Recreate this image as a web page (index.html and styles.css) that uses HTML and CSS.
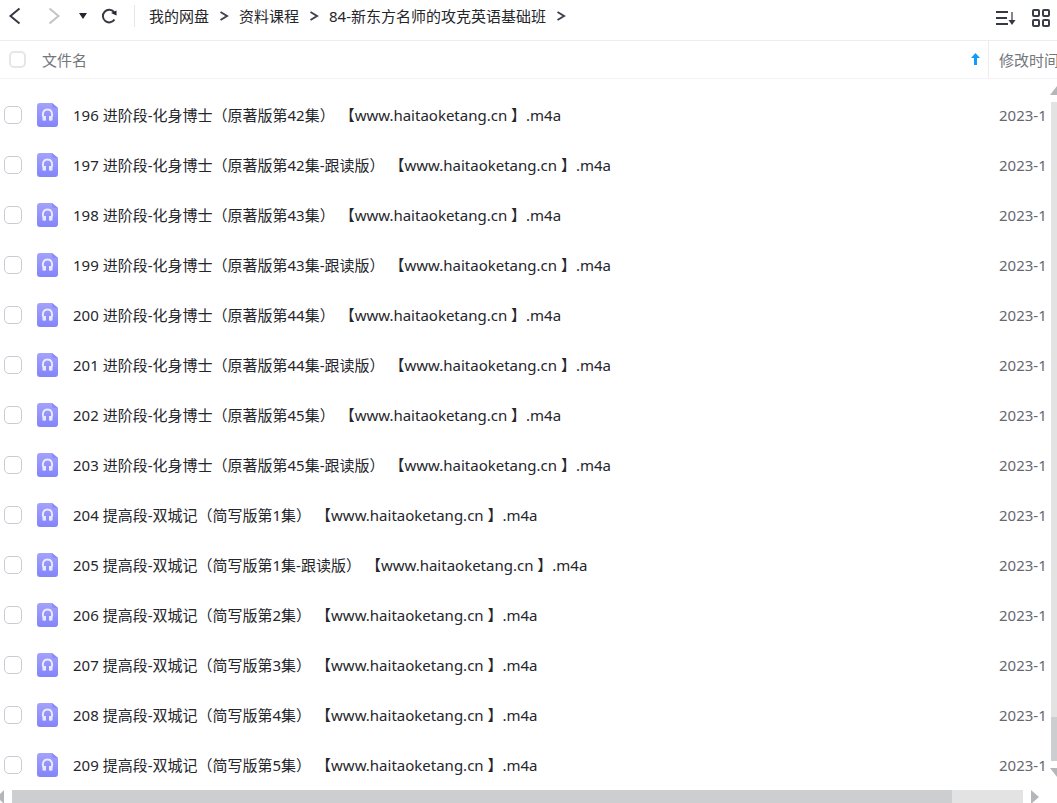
FILE: index.html
```html
<!DOCTYPE html>
<html lang="zh-CN">
<head>
    <meta charset="UTF-8">
    <title>我的网盘</title>
    <link rel="stylesheet" href="styles.css">
</head>
<body>
    <!-- 图标 -->
    <svg class="icon-defs" aria-hidden="true">
        <defs>
            <linearGradient id="audio-bg" x1="0" y1="0" x2="0" y2="1">
                <stop offset="0" stop-color="#a3a2fb"/>
                <stop offset="1" stop-color="#8384fb"/>
            </linearGradient>
        </defs>
        <symbol id="audio" viewBox="0 0 21 24">
            <path d="M3 0h12l6 5v16a3 3 0 0 1-3 3H3a3 3 0 0 1-3-3V3a3 3 0 0 1 3-3z" fill="url(#audio-bg)"/>
            <path d="M15 0l6 5h-4a2 2 0 0 1-2-2z" fill="#8b8bf8"/>
            <path d="M8 16.500H6.500V15C5 11 6 6.500 10.500 6.500S16 11 14.500 15v1.500H13" fill="none" stroke="#e9e9ff" stroke-width="2"/>
            <path d="M7 13h2v4.500H7zM12 13h2v4.500h-2z" fill="#e9e9ff"/>
        </symbol>
        <symbol id="arrow" viewBox="0 0 10 10">
            <path d="M1.500 1L8 5 1.500 9" fill="none" stroke="#40434f" stroke-width="2"/>
        </symbol>
    </svg>

    <div class="page">
        <header class="toolbar">
            <button class="btn" aria-label="后退"><svg width="14" height="18" viewBox="0 0 14 18"><path d="M11.500 1.500L2.500 9l9 7.500" fill="none" stroke="#363945" stroke-width="2"/></svg></button>
            <button class="btn btn-next" aria-label="前进"><svg width="14" height="18" viewBox="0 0 14 18"><path d="M2.500 1.500l9 7.500-9 7.500" fill="none" stroke="#c4c4c6" stroke-width="2"/></svg></button>
            <button class="btn btn-history" aria-label="历史"><svg width="8" height="8" viewBox="0 0 8 8"><path d="M0 1h8L4 7z" fill="#25272f"/></svg></button>
            <button class="btn btn-refresh" aria-label="刷新"><svg width="18" height="18" viewBox="0 0 18 18"><path d="M14.500 12.500A6.300 6.300 0 1 1 14 5" fill="none" stroke="#363945" stroke-width="2"/><path d="M11 6L16.500 3.500v5z" fill="#25272f"/></svg></button>
            <span class="line"></span>
            <nav class="crumbs">
                <a href="#">我的网盘</a>
                <svg class="sep"><use href="#arrow"/></svg>
                <a href="#">资料课程</a>
                <svg class="sep"><use href="#arrow"/></svg>
                <a href="#">84-新东方名师的攻克英语基础班</a>
                <svg class="sep"><use href="#arrow"/></svg>
            </nav>
            <button class="btn btn-sort" aria-label="排序"><svg width="21" height="18" viewBox="0 0 21 18"><path d="M1 3h12M1 9h11M1 15h12" stroke="#363945" stroke-width="2"/><path d="M17 3v11" stroke="#5a5d68" stroke-width="1.500"/><path d="M13.500 11h7L17 16z" fill="#363945"/></svg></button>
            <button class="btn btn-grid" aria-label="宫格"><svg width="18" height="18" viewBox="0 0 18 18"><g fill="none" stroke="#3b3e49" stroke-width="2"><rect x="1" y="1" width="6" height="6" rx="1"/><rect x="11" y="1" width="6" height="6" rx="1"/><rect x="1" y="11" width="6" height="6" rx="1"/><rect x="11" y="11" width="6" height="6" rx="1"/></g></svg></button>
        </header>

        <main class="list">
            <table class="files">
                <thead>
                    <tr>
                        <th class="name">
                            <div class="head">
                                <input type="checkbox" class="check check-all" aria-label="全选">
                                <span>文件名</span>
                                <svg class="up" width="9" height="13" viewBox="0 0 9 13"><path d="M4.500 0L9 5H6v7H3V5H0z" fill="#129bff"/></svg>
                            </div>
                        </th>
                        <th class="date">修改时间</th>
                    </tr>
                </thead>
                <tbody>
                    <tr><td><label class="file"><input type="checkbox" class="check"><svg class="icon"><use href="#audio"/></svg><span>196 进阶段-化身博士（原著版第42集）</span><span class="site">【www.haitaoketang.cn 】.m4a</span></label></td><td class="date"><div>2023-1</div></td></tr>
                    <tr><td><label class="file"><input type="checkbox" class="check"><svg class="icon"><use href="#audio"/></svg><span>197 进阶段-化身博士（原著版第42集-跟读版）</span><span class="site">【www.haitaoketang.cn 】.m4a</span></label></td><td class="date"><div>2023-1</div></td></tr>
                    <tr><td><label class="file"><input type="checkbox" class="check"><svg class="icon"><use href="#audio"/></svg><span>198 进阶段-化身博士（原著版第43集）</span><span class="site">【www.haitaoketang.cn 】.m4a</span></label></td><td class="date"><div>2023-1</div></td></tr>
                    <tr><td><label class="file"><input type="checkbox" class="check"><svg class="icon"><use href="#audio"/></svg><span>199 进阶段-化身博士（原著版第43集-跟读版）</span><span class="site">【www.haitaoketang.cn 】.m4a</span></label></td><td class="date"><div>2023-1</div></td></tr>
                    <tr><td><label class="file"><input type="checkbox" class="check"><svg class="icon"><use href="#audio"/></svg><span>200 进阶段-化身博士（原著版第44集）</span><span class="site">【www.haitaoketang.cn 】.m4a</span></label></td><td class="date"><div>2023-1</div></td></tr>
                    <tr><td><label class="file"><input type="checkbox" class="check"><svg class="icon"><use href="#audio"/></svg><span>201 进阶段-化身博士（原著版第44集-跟读版）</span><span class="site">【www.haitaoketang.cn 】.m4a</span></label></td><td class="date"><div>2023-1</div></td></tr>
                    <tr><td><label class="file"><input type="checkbox" class="check"><svg class="icon"><use href="#audio"/></svg><span>202 进阶段-化身博士（原著版第45集）</span><span class="site">【www.haitaoketang.cn 】.m4a</span></label></td><td class="date"><div>2023-1</div></td></tr>
                    <tr><td><label class="file"><input type="checkbox" class="check"><svg class="icon"><use href="#audio"/></svg><span>203 进阶段-化身博士（原著版第45集-跟读版）</span><span class="site">【www.haitaoketang.cn 】.m4a</span></label></td><td class="date"><div>2023-1</div></td></tr>
                    <tr><td><label class="file"><input type="checkbox" class="check"><svg class="icon"><use href="#audio"/></svg><span>204 提高段-双城记（简写版第1集）</span><span class="site">【www.haitaoketang.cn 】.m4a</span></label></td><td class="date"><div>2023-1</div></td></tr>
                    <tr><td><label class="file"><input type="checkbox" class="check"><svg class="icon"><use href="#audio"/></svg><span>205 提高段-双城记（简写版第1集-跟读版）</span><span class="site">【www.haitaoketang.cn 】.m4a</span></label></td><td class="date"><div>2023-1</div></td></tr>
                    <tr><td><label class="file"><input type="checkbox" class="check"><svg class="icon"><use href="#audio"/></svg><span>206 提高段-双城记（简写版第2集）</span><span class="site">【www.haitaoketang.cn 】.m4a</span></label></td><td class="date"><div>2023-1</div></td></tr>
                    <tr><td><label class="file"><input type="checkbox" class="check"><svg class="icon"><use href="#audio"/></svg><span>207 提高段-双城记（简写版第3集）</span><span class="site">【www.haitaoketang.cn 】.m4a</span></label></td><td class="date"><div>2023-1</div></td></tr>
                    <tr><td><label class="file"><input type="checkbox" class="check"><svg class="icon"><use href="#audio"/></svg><span>208 提高段-双城记（简写版第4集）</span><span class="site">【www.haitaoketang.cn 】.m4a</span></label></td><td class="date"><div>2023-1</div></td></tr>
                    <tr><td><label class="file"><input type="checkbox" class="check"><svg class="icon"><use href="#audio"/></svg><span>209 提高段-双城记（简写版第5集）</span><span class="site">【www.haitaoketang.cn 】.m4a</span></label></td><td class="date"><div>2023-1</div></td></tr>
                </tbody>
            </table>
            <!-- 纵向滚动条 -->
            <div class="vbar">
                <svg width="7" height="9" viewBox="0 0 7 9"><path d="M7 0v9H0z" fill="#b4b7ba"/></svg>
                <div class="vtrack"><div class="vthumb"></div></div>
                <svg width="7" height="9" viewBox="0 0 7 9"><path d="M0 0h7v9z" fill="#b4b7ba"/></svg>
            </div>
        </main>

        <!-- 横向滚动条 -->
        <div class="hbar">
            <svg width="4" height="14" viewBox="0 0 4 14"><path d="M4 0v14L0 10V4z" fill="#b4b7ba"/></svg>
            <div class="htrack"><div class="hthumb"></div></div>
            <svg width="8" height="14" viewBox="0 0 8 14"><path d="M0 0l8 7-8 7z" fill="#b4b7ba"/></svg>
        </div>
    </div>
</body>
</html>
```
FILE: styles.css
```css
* {
    box-sizing: border-box;
}
body {
    margin: 0;
    background: #fff;
    color: #25262b;
    font-family: "Noto Sans", "Noto Sans CJK SC", sans-serif;
    font-size: 15px;
    line-height: 20px;
    text-spacing-trim: space-all;
}
.icon-defs {
    position: absolute;
    width: 0;
    height: 0;
}
.page {
    display: flex;
    flex-direction: column;
    height: 100vh;
    overflow: hidden;
}
.toolbar {
    display: flex;
    align-items: center;
    flex: none;
    height: 41px;
    padding: 0 7px 8px 8px;
    border-bottom: 1px solid #ededef;
}
.btn {
    flex: none;
    padding: 0;
    border: 0;
    background: none;
}
.btn>svg {
    display: block;
}
.btn-next {
    margin-left: 25px;
}
.btn-history {
    margin-left: 18px;
}
.btn-refresh {
    margin-left: 13px;
}
.line {
    width: 1px;
    height: 22px;
    margin: 0 14px 0 16px;
    background: #e6e6e8;
}
.crumbs {
    display: flex;
    flex: 1;
    align-items: center;
    gap: 10px;
    white-space: nowrap;
}
.crumbs>a {
    color: #25262b;
    text-decoration: none;
}
.sep {
    width: 10px;
    height: 10px;
}
.btn-sort,
.btn-grid {
    margin-top: 4px;
}
.btn-grid {
    margin-left: 16px;
}
.list {
    position: relative;
    flex: 1;
    min-height: 0;
    overflow: hidden;
}
.files {
    width: 100%;
    table-layout: fixed;
    border-collapse: separate;
    border-spacing: 0;
}
.files th {
    height: 38px;
    padding: 0;
    border-bottom: 1px solid #f3f3f5;
    color: #74767c;
    font-weight: normal;
    text-align: left;
    white-space: nowrap;
}
.files td {
    height: 50px;
    padding: 0;
}
.files tbody::before {
    content: "";
    display: block;
    height: 11px;
}
.files .date {
    width: 69px;
    padding-left: 10px;
    overflow: hidden;
}
.files th.date {
    border-left: 1px solid #ededef;
}
.files td.date {
    padding: 0 11px;
    color: #66686f;
}
.date>div {
    overflow: hidden;
    white-space: nowrap;
}
.head {
    display: flex;
    align-items: center;
    gap: 16px;
    padding: 0 8px 0 9px;
}
.up {
    margin-left: auto;
}
.file {
    display: flex;
    align-items: center;
    padding-left: 4px;
    white-space: nowrap;
}
.site {
    margin-left: 5px;
}
.check {
    flex: none;
    appearance: none;
    width: 18px;
    height: 18px;
    margin: 0;
    border: 1px solid #c9ccd3;
    border-radius: 5px;
    background: #fff;
}
.check-all {
    width: 17px;
    height: 17px;
    border: 2px solid #e6e6e8;
}
.icon {
    flex: none;
    width: 21px;
    height: 24px;
    margin: 0 15px;
}
.vbar {
    position: absolute;
    top: 45px;
    right: 0;
    bottom: 13px;
    display: flex;
    flex-direction: column;
    align-items: flex-end;
    gap: 7px;
    width: 7px;
}
.vtrack {
    display: flex;
    flex: 1;
    flex-direction: column;
    justify-content: flex-end;
    width: 6px;
    background: #e3e3e4;
}
.vthumb {
    height: 44px;
    background: #cdced0;
}
.hbar {
    display: flex;
    flex: none;
    gap: 8px;
    height: 13px;
    padding-right: 18px;
}
.hbar>svg {
    flex: none;
}
.htrack {
    flex: 1;
    background: #e3e3e4;
}
.hthumb {
    width: 93%;
    height: 100%;
    background: #cdced0;
}
```
